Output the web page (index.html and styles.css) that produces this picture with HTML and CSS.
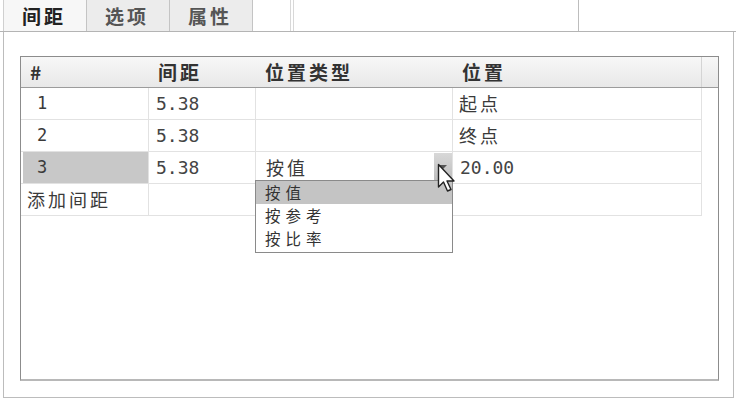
FILE: index.html
```html
<!DOCTYPE html>
<html lang="zh-CN">
<head>
    <meta charset="UTF-8">
    <title>间距</title>
    <link rel="stylesheet" href="styles.css">
</head>
<body>

    <div class="tabs">
        <div class="tab active">间距</div>
        <div class="tab">选项</div>
        <div class="tab">属性</div>
        <div class="tab-gap first"></div>
        <div class="tab-gap second"></div>
        <div class="tab-gap rest"></div>
    </div>

    <div class="panel">
        <div class="grid">
            <!-- header -->
            <div class="grid-head">
                <div class="hcell">#</div>
                <div class="hcell">间距</div>
                <div class="hcell">位置类型</div>
                <div class="hcell">位置</div>
                <div class="hcell filler"></div>
            </div>

            <div class="grid-row">
                <div class="cell idx">1</div>
                <div class="cell num">5.38</div>
                <div class="cell"></div>
                <div class="cell">起点</div>
            </div>
            <div class="grid-row">
                <div class="cell idx">2</div>
                <div class="cell num">5.38</div>
                <div class="cell"></div>
                <div class="cell">终点</div>
            </div>
            <div class="grid-row">
                <div class="cell idx selected">3</div>
                <div class="cell num">5.38</div>
                <div class="cell editor">
                    <span>按值</span>
                    <span class="drop-btn"><span class="tri"></span></span>
                </div>
                <div class="cell num">20.00</div>
            </div>
            <div class="grid-row">
                <div class="cell">添加间距</div>
                <div class="cell"></div>
                <div class="cell"></div>
                <div class="cell"></div>
            </div>

            <!-- open combo list -->
            <div class="droplist">
                <div class="option hover">按值</div>
                <div class="option">按参考</div>
                <div class="option">按比率</div>
            </div>

            <svg class="cursor" width="20" height="34" viewBox="0 0 20 34">
                <path d="M1.5 1.5 L1.5 24 L6.5 19 L10.5 28 L14 26.5 L10 18 L17 18 Z" fill="#fff" stroke="#222" stroke-width="1.4" stroke-linejoin="round"/>
            </svg>
        </div>
    </div>

</body>
</html>
```

FILE: styles.css
```css
body {
    margin: 0;
    width: 736px;
    height: 399px;
    background-color: #fff;
    font-family: "Noto Sans CJK SC", sans-serif;
    color: #333;
    overflow: hidden;
}

.tabs {
    display: flex;
    height: 32px;
    padding-left: 3px;
    box-sizing: border-box;
    border-bottom: 1px solid #b4b4b4;
}

.tab {
    width: 83px;
    box-sizing: border-box;
    border-right: 1px solid #c4c4c4;
    background-color: #ececec;
    font-size: 19px;
    font-weight: bold;
    letter-spacing: 3px;
    color: #555;
    padding-left: 18px;
    line-height: 31px;
}

.tab.active {
    width: 84px;
    background-color: #f7f7f7;
    color: #222;
    border-left: 1px solid #d0d0d0;
}

.tab-gap.first {
    width: 37px;
    border-right: 1px solid #d8d8d8;
}

.tab-gap.second {
    width: 284px;
    margin-left: 2px;
    border-left: 1px solid #d8d8d8;
    border-right: 1px solid #bdbdbd;
}

.panel {
    margin-left: 3px;
    width: 731px;
    height: 366px;
    box-sizing: border-box;
    border: 1px solid #bcbcbc;
    border-top: none;
    padding: 24px 0 0 16px;
}

.grid {
    position: relative;
    width: 699px;
    height: 325px;
    box-sizing: border-box;
    border: 1px solid #8c8c8c;
    border-bottom: 2px solid #b8b8b8;
}

.grid-head {
    display: grid;
    grid-template-columns: 128px 107px 197px 248px 1fr;
    height: 30px;
    background: linear-gradient(#f7f7f7, #e8e8e8);
    border-bottom: 1px solid #9c9c9c;
}

.hcell {
    font-size: 19px;
    font-weight: bold;
    letter-spacing: 3px;
    color: #333;
    line-height: 30px;
    padding-left: 9px;
}

.hcell.filler {
    border-left: 1px solid #d4d4d4;
}

.grid-row {
    display: grid;
    grid-template-columns: 128px 107px 197px 248px;
    width: 681px;
    height: 32px;
    border-bottom: 1px solid #e2e2e2;
    border-right: 1px solid #e2e2e2;
    box-sizing: border-box;
}

.cell {
    font-size: 18px;
    letter-spacing: 3px;
    line-height: 31px;
    padding-left: 6px;
    border-right: 1px solid #e2e2e2;
    color: #3a3a3a;
}

.cell:last-child {
    border-right: none;
}

.cell.idx {
    font-family: "DejaVu Sans Mono", monospace;
    font-size: 17px;
    letter-spacing: 0;
    padding-left: 16px;
}

.cell.selected {
    background-color: #c8c8c8;
    margin: 0 0 0 2px;
    padding-left: 14px;
}

.cell.num {
    font-family: "DejaVu Sans Mono", monospace;
    font-size: 18px;
    letter-spacing: 0;
    padding-left: 7px;
    color: #444;
}

.cell.editor {
    display: flex;
    justify-content: space-between;
    padding-left: 10px;
}

.drop-btn {
    width: 18px;
    height: 29px;
    margin-top: 1px;
    background: linear-gradient(#d8d8d8, #bcbcbc);
    display: flex;
    justify-content: center;
    padding-top: 12px;
    box-sizing: border-box;
}

.tri {
    width: 0;
    height: 0;
    border-left: 4px solid transparent;
    border-right: 4px solid transparent;
    border-top: 4px solid #555;
}

.droplist {
    position: absolute;
    left: 234px;
    top: 123px;
    width: 198px;
    height: 73px;
    box-sizing: border-box;
    border: 1px solid #8a8a8a;
    background-color: #fff;
}

.option {
    font-size: 15.5px;
    letter-spacing: 5px;
    line-height: 23px;
    height: 23px;
    padding-left: 9px;
    color: #333;
}

.option.hover {
    background-color: #c4c4c4;
}

.cursor {
    position: absolute;
    left: 416px;
    top: 106px;
}
```
